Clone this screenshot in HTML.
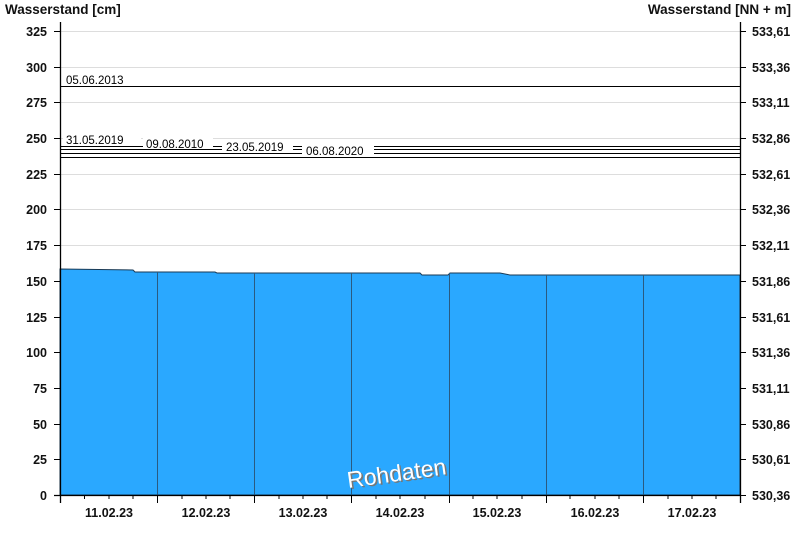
<!DOCTYPE html>
<html><head><meta charset="utf-8"><style>
html,body{margin:0;padding:0;background:#fff;}
svg{display:block;font-family:"Liberation Sans",Arial,sans-serif;}
.b{font-weight:bold;font-size:12.5px;fill:#111;}
.t{font-weight:bold;font-size:13.5px;fill:#111;}
.l{font-size:11.5px;fill:#000;}
</style></head><body>
<svg width="800" height="550" viewBox="0 0 800 550">
<rect width="800" height="550" fill="#fff"/>
<text x="5" y="14" class="t">Wasserstand [cm]</text>
<text x="791" y="14" class="t" text-anchor="end">Wasserstand [NN + m]</text>
<g stroke="#dddddd" stroke-width="1">
<line x1="60" x2="740" y1="31.5" y2="31.5"/><line x1="60" x2="740" y1="67.5" y2="67.5"/>
<line x1="60" x2="740" y1="102.5" y2="102.5"/><line x1="60" x2="740" y1="138.5" y2="138.5"/>
<line x1="60" x2="740" y1="174.5" y2="174.5"/><line x1="60" x2="740" y1="209.5" y2="209.5"/>
<line x1="60" x2="740" y1="245.5" y2="245.5"/>
</g>
<g stroke="#000" stroke-width="1">
<line x1="60" x2="740" y1="86.5" y2="86.5"/>
<line x1="60" x2="740" y1="146.5" y2="146.5"/>
<line x1="60" x2="740" y1="149.5" y2="149.5"/>
<line x1="60" x2="740" y1="153.5" y2="153.5"/>
<line x1="60" x2="740" y1="157.5" y2="157.5"/>
</g>
<rect x="63" y="135" width="78" height="10.5" fill="#fff"/>
<rect x="143" y="137" width="70" height="12" fill="#fff"/>
<rect x="222" y="141" width="71" height="11.5" fill="#fff"/>
<rect x="302" y="144" width="72" height="13" fill="#fff"/>
<text x="66" y="84" class="l">05.06.2013</text>
<text x="66" y="144" class="l">31.05.2019</text>
<text x="146" y="148" class="l">09.08.2010</text>
<text x="226" y="151" class="l">23.05.2019</text>
<text x="306" y="155" class="l">06.08.2020</text>
<polygon points="60,269 133,270 135,272 215,272 217,273 420,273 422,275 448,275 450,273 500,273 510,275 740,275 740,495 60,495" fill="#2aa8ff" stroke="#1a3a55" stroke-width="1"/>
<g stroke="#2a5a80" stroke-width="1">
<line x1="157.5" x2="157.5" y1="272" y2="495"/><line x1="254.5" x2="254.5" y1="273" y2="495"/>
<line x1="351.5" x2="351.5" y1="273" y2="495"/><line x1="449.5" x2="449.5" y1="273" y2="495"/>
<line x1="546.5" x2="546.5" y1="275" y2="495"/><line x1="643.5" x2="643.5" y1="275" y2="495"/>
</g>
<text x="346" y="481" transform="rotate(-8 397 468)" font-size="23" fill="#777" dx="1.5" dy="1.5">Rohdaten</text>
<text x="346" y="481" transform="rotate(-8 397 468)" font-size="23" fill="#fff">Rohdaten</text>
<g stroke="#000" stroke-width="1.3">
<line x1="60.5" x2="60.5" y1="22" y2="503"/>
<line x1="740.5" x2="740.5" y1="22" y2="503"/>
<line x1="54" x2="740" y1="495.5" y2="495.5"/>
</g>
<g stroke="#000" stroke-width="1">
<path d="M54 31.5h6M54 67.5h6M54 102.5h6M54 138.5h6M54 174.5h6M54 209.5h6M54 245.5h6M54 281.5h6M54 317.5h6M54 352.5h6M54 388.5h6M54 424.5h6M54 459.5h6"/>
<path d="M740 31.5h6M740 67.5h6M740 102.5h6M740 138.5h6M740 174.5h6M740 209.5h6M740 245.5h6M740 281.5h6M740 317.5h6M740 352.5h6M740 388.5h6M740 424.5h6M740 459.5h6M740 495.5h6"/>
<path d="M157.5 495v8M254.5 495v8M351.5 495v8M449.5 495v8M546.5 495v8M643.5 495v8"/>
<path d="M84.5 495v4M109 495v4M133 495v4M182 495v4M206 495v4M230 495v4M279 495v4M303 495v4M327 495v4M376 495v4M400 495v4M425 495v4M473 495v4M497 495v4M522 495v4M570 495v4M595 495v4M619 495v4M668 495v4M692 495v4M716 495v4"/>
</g>
<g class="b" text-anchor="end">
<text x="47" y="36">325</text><text x="47" y="72">300</text><text x="47" y="107">275</text>
<text x="47" y="143">250</text><text x="47" y="179">225</text><text x="47" y="214">200</text>
<text x="47" y="250">175</text><text x="47" y="286">150</text><text x="47" y="322">125</text>
<text x="47" y="357">100</text><text x="47" y="393">75</text><text x="47" y="429">50</text>
<text x="47" y="464">25</text><text x="47" y="500">0</text>
</g>
<g class="b">
<text x="752" y="36">533,61</text><text x="752" y="72">533,36</text><text x="752" y="107">533,11</text>
<text x="752" y="143">532,86</text><text x="752" y="179">532,61</text><text x="752" y="214">532,36</text>
<text x="752" y="250">532,11</text><text x="752" y="286">531,86</text><text x="752" y="322">531,61</text>
<text x="752" y="357">531,36</text><text x="752" y="393">531,11</text><text x="752" y="429">530,86</text>
<text x="752" y="464">530,61</text><text x="752" y="500">530,36</text>
</g>
<g class="b" text-anchor="middle">
<text x="109" y="517">11.02.23</text><text x="206" y="517">12.02.23</text><text x="303" y="517">13.02.23</text>
<text x="400" y="517">14.02.23</text><text x="497" y="517">15.02.23</text><text x="595" y="517">16.02.23</text>
<text x="692" y="517">17.02.23</text>
</g>
</svg>
</body></html>
